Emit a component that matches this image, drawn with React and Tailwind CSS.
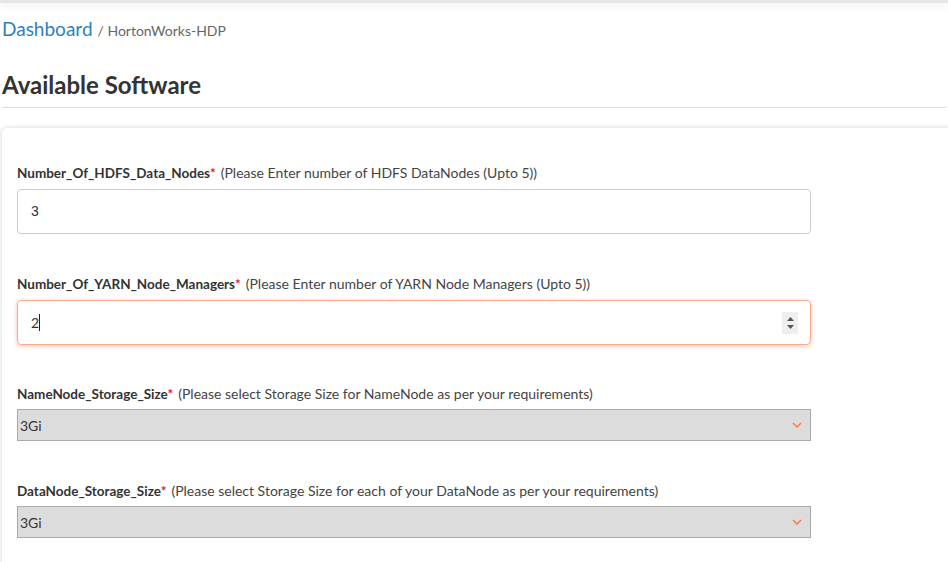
import React from "react";

const font = { fontFamily: "Lato, 'Noto Sans', sans-serif" };

function Label({ name, hint, mb = "mb-[6px]" }) {
  return (
    <div className={`h-[20px] text-[14px] leading-[20px] text-[#333] whitespace-nowrap ${mb}`}>
      <span className="text-[13.5px] font-bold">{name}</span>
      <span className="text-[13.5px] text-[#e0202a] font-bold">*</span>
      <span className="ml-[5px] text-[#444]">{hint}</span>
    </div>
  );
}

function Chevron() {
  return (
    <svg width="10" height="6" viewBox="0 0 10 6" className="mr-[6px]">
      <path d="M1 1 L5 5 L9 1" fill="none" stroke="#ff7a50" strokeWidth="1.6" />
    </svg>
  );
}

function SelectBox({ value }) {
  return (
    <div className="w-[794px] h-[32px] flex items-center justify-between bg-[#dcdcdc] border border-[#aaa] px-[2px] text-[14px] text-[#333]">
      <span>{value}</span>
      <Chevron />
    </div>
  );
}

export default function App() {
  return (
    <div className="w-[948px] h-[562px] overflow-hidden bg-white" style={font}>
      <div className="h-[3px] bg-[#e6e6e6] shadow-[0_2px_8px_rgba(0,0,0,0.12)]" />
      <div className="px-[2px]">
        <div className="mt-[12px] flex items-baseline h-[28px]">
          <span className="text-[19px] text-[#2f7fbf]">Dashboard</span>
          <span className="ml-[5px] text-[14px] text-[#666]">/ HortonWorks-HDP</span>
        </div>
        <h2 className="mt-[26px] text-[24px] leading-[32px] font-bold text-[#333]">Available Software</h2>
        <div className="mt-[6px] h-px bg-[#dcdcdc]" />
        <div className="mt-[20px] w-[980px] rounded-[5px] bg-white shadow-[0_0_5px_rgba(0,0,0,0.18)] pl-[15px] pt-[35px] pb-[40px]">
          <Label
            name="Number_Of_HDFS_Data_Nodes"
            hint="(Please Enter number of HDFS DataNodes (Upto 5))"
          />
          <div
            className="w-[794px] h-[45px] flex items-center border border-[#ccc] rounded-[4px] pl-[13px] text-[14px] text-[#333]"
            style={{ fontFamily: "'Liberation Sans', Arial, sans-serif" }}
          >
            3
          </div>

          <div className="mt-[40px]">
            <Label
              name="Number_Of_YARN_Node_Managers"
              hint="(Please Enter number of YARN Node Managers (Upto 5))"
            />
          </div>
          <div className="w-[794px] h-[45px] flex items-center justify-between border border-[#fcaa8e] rounded-[4px] pl-[13px] pr-[12px] text-[14px] text-[#333] shadow-[0_1px_4px_rgba(255,110,70,0.45)]">
            <div className="flex items-center">
              <span>2</span>
              <span className="w-px h-[17px] bg-[#222]" />
            </div>
            <div className="w-[16px] h-[22px] bg-[#efefef] flex flex-col items-center justify-center gap-[4px]">
              <svg width="7" height="4" viewBox="0 0 7 4">
                <path d="M0 4 L3.5 0 L7 4 Z" fill="#555" />
              </svg>
              <svg width="7" height="4" viewBox="0 0 7 4">
                <path d="M0 0 L7 0 L3.5 4 Z" fill="#555" />
              </svg>
            </div>
          </div>

          <div className="mt-[39px]">
            <Label
              name="NameNode_Storage_Size"
              hint="(Please select Storage Size for NameNode as per your requirements)"
              mb="mb-[5px]"
            />
          </div>
          <SelectBox value="3Gi" />

          <div className="mt-[40px]">
            <Label
              name="DataNode_Storage_Size"
              hint="(Please select Storage Size for each of your DataNode as per your requirements)"
              mb="mb-[5px]"
            />
          </div>
          <SelectBox value="3Gi" />
        </div>
      </div>
    </div>
  );
}
